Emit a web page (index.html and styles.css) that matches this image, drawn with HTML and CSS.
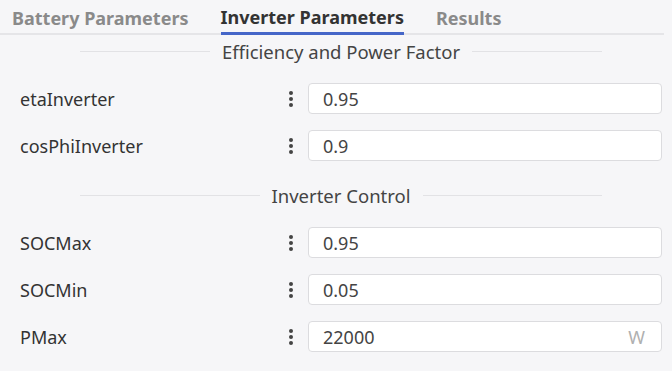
FILE: index.html
```html
<!DOCTYPE html>
<html lang="en">
<head>
    <meta charset="UTF-8">
    <meta name="viewport" content="width=device-width, initial-scale=1.0">
    <title>Inverter Parameters</title>
    <link rel="stylesheet" href="styles.css">
</head>
<body>
    <div class="tabs">
        <div class="tab">Battery Parameters</div>
        <div class="tab active">Inverter Parameters</div>
        <div class="tab">Results</div>
    </div>

    <div class="panel">
        <div class="divider first"><span>Efficiency and Power Factor</span></div>

        <div class="row">
            <label class="name">etaInverter</label>
            <span class="kebab"><i></i><i></i><i></i></span>
            <div class="field"><span class="value">0.95</span></div>
        </div>
        <div class="row">
            <label class="name">cosPhiInverter</label>
            <span class="kebab"><i></i><i></i><i></i></span>
            <div class="field"><span class="value">0.9</span></div>
        </div>

        <div class="divider"><span>Inverter Control</span></div>

        <div class="row">
            <label class="name">SOCMax</label>
            <span class="kebab"><i></i><i></i><i></i></span>
            <div class="field"><span class="value">0.95</span></div>
        </div>
        <div class="row">
            <label class="name">SOCMin</label>
            <span class="kebab"><i></i><i></i><i></i></span>
            <div class="field"><span class="value">0.05</span></div>
        </div>
        <div class="row">
            <label class="name">PMax</label>
            <span class="kebab"><i></i><i></i><i></i></span>
            <div class="field"><span class="value">22000</span><span class="unit">W</span></div>
        </div>
    </div>
</body>
</html>
```

FILE: styles.css
```css
body {
    margin: 0;
    padding: 0;
    font-family: "Noto Sans", "Open Sans", sans-serif;
    background-color: #f6f6f8;
    color: #3a3a3a;
}

.tabs {
    display: flex;
    gap: 32px;
    padding: 0 12px;
    margin-right: 8px;
    height: 33px;
    border-bottom: 2px solid #e5e5e8;
}

.tab {
    font-size: 18px;
    font-weight: bold;
    color: #8a8a8a;
    line-height: 36px;
    height: 33px;
    box-sizing: border-box;
}

.tab.active {
    color: #333;
    border-bottom: 3px solid #4566c8;
    height: 35px;
    line-height: 34px;
}

.panel {
    padding: 0 10px 0 20px;
}

.divider {
    display: flex;
    align-items: center;
    gap: 12px;
    margin: 23px 60px 0 60px;
    font-size: 18.5px;
    color: #444;
    height: 23px;
}

.divider.first {
    margin-top: 5px;
}

.divider::before,
.divider::after {
    content: "";
    flex: 1;
    height: 1px;
    background-color: #e2e2e5;
}

.row {
    display: flex;
    align-items: center;
    margin-top: 16px;
}

.divider + .row {
    margin-top: 20px;
}

.name {
    width: 260px;
    font-size: 18px;
    color: #333;
}

.kebab {
    width: 22px;
    margin-right: 6px;
    display: flex;
    flex-direction: column;
    align-items: center;
    gap: 2px;
}

.kebab i {
    width: 4px;
    height: 4px;
    border-radius: 50%;
    background-color: #444;
}

.field {
    flex: 1;
    display: flex;
    justify-content: space-between;
    align-items: center;
    height: 31px;
    box-sizing: border-box;
    padding: 0 16px 0 14px;
    background-color: #fff;
    border: 1px solid #dcdcdf;
    border-radius: 4px;
    font-size: 18px;
    color: #444;
}

.unit {
    color: #b0b0b0;
}
```
